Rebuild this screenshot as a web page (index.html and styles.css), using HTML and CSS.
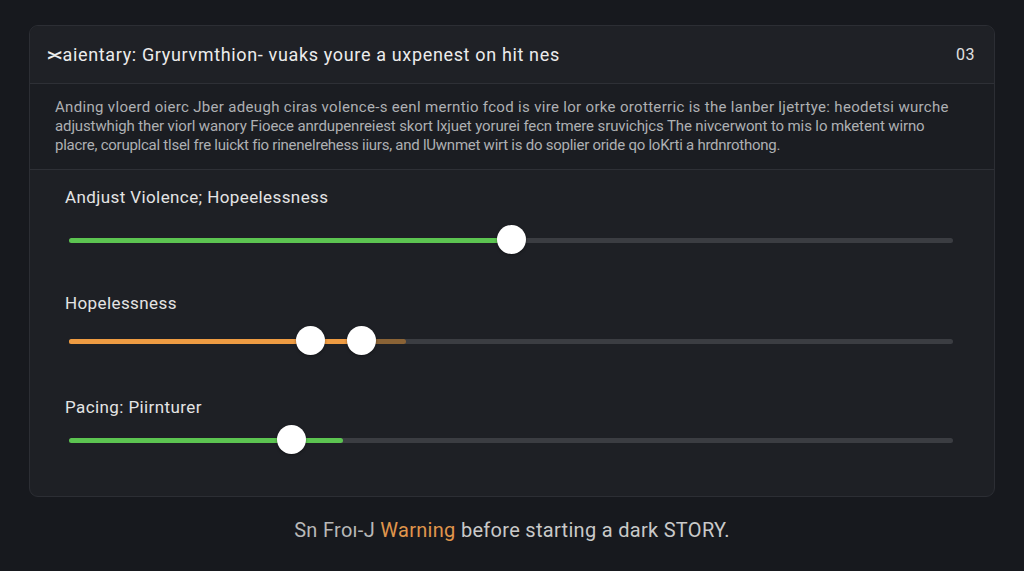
FILE: index.html
```html
<!DOCTYPE html>
<html lang="en">
<head>
<meta charset="utf-8">
<title>Content sliders</title>
<link rel="stylesheet" href="styles.css">
</head>
<body>
<main class="page">
  <section class="card">
    <header class="card-head">
      <h1 class="card-title"><span class="title-icon">&gt;&lt;</span>aientary: Gryurvmthion- vuaks youre a uxpenest on hit nes</h1>
      <span class="card-count">03</span>
    </header>
    <p class="card-desc"><span class="desc-line">Anding vloerd oierc Jber adeugh ciras volence-s eenl merntio fcod is vire lor orke orotterric is the lanber ljetrtye: heodetsi wurche</span><span class="desc-line desc-line-two">adjustwhigh ther viorl wanory Fioece anrdupenreiest skort lxjuet yorurei fecn tmere sruvichjcs The nivcerwont to mis lo mketent wirno</span><span class="desc-line desc-line-three">placre, coruplcal tlsel fre luickt fio rinenelrehess iiurs, and lUwnmet wirt is do soplier oride qo loKrti a hrdnrothong.</span></p>
    <div class="sliders">
      <div class="slider slider-one">
        <div class="slider-label">Andjust Violence; Hopeelessness</div>
        <div class="track">
          <div class="fill fill-green" style="width:50%"></div>
          <span class="thumb" style="left:50%"></span>
        </div>
      </div>
      <div class="slider slider-two">
        <div class="slider-label">Hopelessness</div>
        <div class="track">
          <div class="fill fill-orange-soft" style="width:38.1%"></div>
          <div class="fill fill-orange" style="width:33.1%"></div>
          <span class="thumb" style="left:27.3%"></span>
          <span class="thumb" style="left:33.1%"></span>
        </div>
      </div>
      <div class="slider slider-three">
        <div class="slider-label">Pacing: Piirnturer</div>
        <div class="track">
          <div class="fill fill-green" style="width:31%"></div>
          <span class="thumb" style="left:25.2%"></span>
        </div>
      </div>
    </div>
  </section>
  <p class="footer-note"><span class="note-muted">Sn Froı-J</span> <span class="note-warn">Warning</span> before starting a dark STORY.</p>
</main>
</body>
</html>
```

FILE: styles.css
```css
* { box-sizing: border-box; }
html, body { margin: 0; padding: 0; }
body {
  background: #17191e;
  font-family: Roboto, "Noto Sans", "Liberation Sans", sans-serif;
  color: #e6e6e6;
  width: 1024px;
  height: 571px;
  overflow: hidden;
}
.page {
  display: flex;
  flex-direction: column;
  align-items: center;
  padding-top: 25px;
}
.card {
  width: 966px;
  height: 472px;
  background: #1e2025;
  border: 1px solid #2c2e34;
  border-radius: 9px;
  display: flex;
  flex-direction: column;
  overflow: hidden;
}
.card-head {
  height: 58px;
  display: flex;
  align-items: center;
  justify-content: space-between;
  padding: 0 19px 0 17px;
  background: #1f2126;
  border-bottom: 1px solid #2e3036;
}
.card-title {
  margin: 0;
  font-size: 18px;
  font-weight: 400;
  color: #ececec;
  letter-spacing: 0.65px;
}
.title-icon {
  letter-spacing: -3px;
  margin-right: 3px;
  font-weight: 500;
}
.card-count {
  font-size: 16px;
  color: #e0e0e0;
  letter-spacing: 0.5px;
}
.card-desc {
  margin: 0;
  padding: 14px 0 14px 25px;
  font-size: 15px;
  line-height: 19px;
  color: #aeb0b3;
  white-space: nowrap;
  background: #1b1d22;
  border-bottom: 1px solid #2e3036;
  letter-spacing: 0.32px;
  display: flex;
  flex-direction: column;
}
.desc-line-two { letter-spacing: -0.12px; }
.desc-line-three { letter-spacing: -0.25px; }
.sliders {
  display: flex;
  flex-direction: column;
  padding: 17px 41px 0 35px;
}
.slider-label {
  font-size: 17px;
  line-height: 20px;
  color: #e4e4e4;
  letter-spacing: 0.4px;
}
.slider-one .slider-label { margin-bottom: 18px; }
.slider-two { margin-top: 38px; }
.slider-two .slider-label { margin-bottom: 13px; }
.slider-three { margin-top: 41px; }
.slider-three .slider-label { margin-bottom: 8px; }
.track {
  position: relative;
  height: 30px;
  margin-left: 4px;
}
.track::before {
  content: "";
  position: absolute;
  left: 0;
  right: 0;
  top: 12.5px;
  height: 5px;
  border-radius: 3px;
  background: #3b3d42;
}
.fill {
  position: absolute;
  left: 0;
  top: 12.5px;
  height: 5px;
  border-radius: 3px;
}
.fill-green { background: #5cc451; }
.fill-orange { background: #ee9b42; }
.fill-orange-soft { background: #8a6336; }
.thumb {
  position: absolute;
  top: 0;
  width: 29px;
  height: 29px;
  margin-left: -14.5px;
  border-radius: 50%;
  background: #ffffff;
  box-shadow: 0 1px 3px rgba(0,0,0,0.4);
}
.footer-note {
  margin: 21px 0 0;
  font-size: 20px;
  line-height: 24px;
  color: #c9c9c9;
  letter-spacing: 0.3px;
}
.note-muted { color: #b8b8b8; }
.note-warn { color: #e0964c; }
```
